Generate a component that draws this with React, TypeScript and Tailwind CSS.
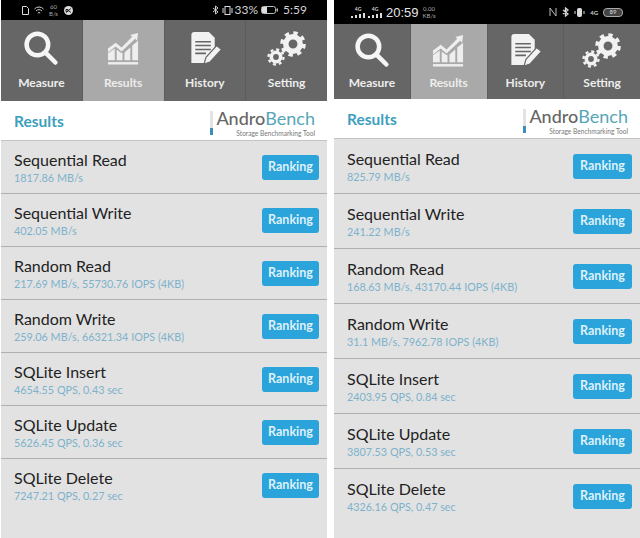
import React from "react";

const font = { fontFamily: 'Lato, "Noto Sans", sans-serif' };

type Row = { name: string; value: string };

const leftRows: Row[] = [
  { name: "Sequential Read", value: "1817.86 MB/s" },
  { name: "Sequential Write", value: "402.05 MB/s" },
  { name: "Random Read", value: "217.69 MB/s, 55730.76 IOPS (4KB)" },
  { name: "Random Write", value: "259.06 MB/s, 66321.34 IOPS (4KB)" },
  { name: "SQLite Insert", value: "4654.55 QPS, 0.43 sec" },
  { name: "SQLite Update", value: "5626.45 QPS, 0.36 sec" },
  { name: "SQLite Delete", value: "7247.21 QPS, 0.27 sec" },
];

const rightRows: Row[] = [
  { name: "Sequential Read", value: "825.79 MB/s" },
  { name: "Sequential Write", value: "241.22 MB/s" },
  { name: "Random Read", value: "168.63 MB/s, 43170.44 IOPS (4KB)" },
  { name: "Random Write", value: "31.1 MB/s, 7962.78 IOPS (4KB)" },
  { name: "SQLite Insert", value: "2403.95 QPS, 0.84 sec" },
  { name: "SQLite Update", value: "3807.53 QPS, 0.53 sec" },
  { name: "SQLite Delete", value: "4326.16 QPS, 0.47 sec" },
];

function SearchIcon() {
  return (
    <svg width="36" height="36" viewBox="0 0 40 40" fill="none" stroke="#f6f6f6">
      <circle cx="16" cy="15" r="12" strokeWidth="5" />
      <path d="M25 24l11 11" strokeWidth="5" strokeLinecap="round" />
    </svg>
  );
}

function ChartIcon() {
  return (
    <svg width="33" height="35" viewBox="0 0 34 36" fill="#eeeeee">
      <path d="M1 18l8-6 6 5 11-11-2-2 8-2-1 8-2-2-14 13-6-5-8 6z" />
      <path d="M1 23l7-5v12H1zM10 19l4 3 2 1v7h-6zM18 22l6-5v13h-6zM26 15l6-5v20h-6z" />
      <rect x="1" y="32" width="31" height="2.5" />
    </svg>
  );
}

function DocIcon() {
  return (
    <svg width="36" height="37" viewBox="0 0 36 38" fill="none">
      <path d="M7 2h15l6 6v14l-9 12H4V5a3 3 0 013-3z" fill="#f2f2f2" />
      <path d="M8 12h16M8 16h16M8 20h16M8 24h11" stroke="#666" strokeWidth="1.6" />
      <path d="M30 16l5 4-12 13-6 2 2-7z" fill="#f2f2f2" stroke="#666" strokeWidth="1.2" />
    </svg>
  );
}

function Gear({ x, y, r }: { x: number; y: number; r: number }) {
  const teeth = 2 * Math.PI * (r + 1);
  const dash = teeth / 8 / 2;
  return (
    <g fill="none" stroke="#f2f2f2">
      <circle cx={x} cy={y} r={r * 0.72} strokeWidth={r * 0.55} />
      <circle cx={x} cy={y} r={r + 1} strokeWidth={r * 0.36} strokeDasharray={`${dash} ${dash}`} />
    </g>
  );
}

function GearsIcon() {
  return (
    <svg width="40" height="36" viewBox="0 0 40 36">
      <Gear x={26} y={13} r={10} />
      <Gear x={9} y={26} r={6.5} />
    </svg>
  );
}

function Tab({
  label,
  active,
  icon,
  labelPad,
}: {
  label: string;
  active?: boolean;
  icon: React.ReactNode;
  labelPad: string;
}) {
  return (
    <div
      className={`flex-1 flex flex-col items-center justify-end border-r border-[#5c5c5c] last:border-r-0 ${labelPad} ${
        active ? "bg-[#a9a9a9]" : "bg-[#666666]"
      }`}
    >
      <div className="flex-1 flex items-center justify-center pt-1">{icon}</div>
      <span className="text-[12px] font-bold leading-[19px] text-[#ededed]">{label}</span>
    </div>
  );
}

function Logo() {
  return (
    <div className="flex items-start pt-[3px]">
      <div className="w-[3px] h-[24px] mt-[3px] bg-[#e3e3e3] flex flex-col justify-end mr-[3px]">
        <div className="h-[7px] bg-[#3c8ebd]" />
      </div>
      <div className="flex flex-col items-end">
        <span className="text-[18px] leading-[21px] text-[#666]">
          <span className="font-medium">Andro</span>
          <span className="text-[#56a6b8]">Bench</span>
        </span>
        <span className="text-[6.6px] leading-[8px] text-[#777]">Storage Benchmarking Tool</span>
      </div>
    </div>
  );
}

function ResultRow({ row, height, button }: { row: Row; height: string; button: string }) {
  return (
    <div className={`flex items-center justify-between pl-[13px] pr-2 border-b border-[#b0b0b0] last:border-transparent ${height}`}>
      <div className="flex flex-col">
        <span className="text-[16px] leading-[20px] text-[#222]">{row.name}</span>
        <span className="text-[10.8px] leading-[15px] text-[#7db2cc]">{row.value}</span>
      </div>
      <div className={`h-[25px] rounded-[3px] bg-[#2ba3db] flex items-center justify-center text-[12.5px] font-bold text-[#dff1fa] ${button}`}>
        Ranking
      </div>
    </div>
  );
}

function LeftStatus() {
  return (
    <div className="h-5 bg-black flex items-center justify-between pl-[21px] pr-5 text-[#d4d4d4]">
      <div className="flex items-center gap-[5px]">
        <svg width="7" height="9" viewBox="0 0 7 9" fill="none" stroke="#ddd">
          <path d="M.5.5h4l2 2v6h-6z" />
        </svg>
        <svg width="10" height="9" viewBox="0 0 10 9" fill="none" stroke="#ccc">
          <path d="M.5 3a6 6 0 019 0M2 5a4 4 0 016 0M3.8 7a2 2 0 012.4 0" />
        </svg>
        <span className="text-[6px] leading-[7px] text-center text-[#aaa]">
          60
          <br />
          B/s
        </span>
        <svg width="9" height="9" viewBox="0 0 9 9" className="ml-[1px]">
          <circle cx="4.5" cy="4.5" r="4.5" fill="#ddd" />
          <path d="M2 6.5l5-4M2 3.5h2v2H2zM5 5l2 1.5" stroke="#222" strokeWidth="1" fill="none" />
        </svg>
      </div>
      <div className="flex items-center gap-[2px] text-[12px]">
        <svg width="7" height="10" viewBox="0 0 7 10" fill="none" stroke="#ccc">
          <path d="M1 3l5 4-2.5 2V1L6 3 1 7" />
        </svg>
        <svg width="11" height="9" viewBox="0 0 11 9" fill="none" stroke="#ddd" className="ml-[1px]">
          <rect x="3" y=".5" width="5" height="8" />
          <path d="M1 2v5M10 2v5" />
        </svg>
        <span>33%</span>
        <svg width="18" height="8" viewBox="0 0 18 8" className="ml-[1px] mr-[2px]">
          <rect x=".5" y=".5" width="14" height="7" rx="2" fill="none" stroke="#bbb" />
          <rect x="1" y="1" width="5" height="6" fill="#ddd" />
          <rect x="15.5" y="2.5" width="1.5" height="3" fill="#bbb" />
        </svg>
        <span>5:59</span>
      </div>
    </div>
  );
}

function Signal() {
  return (
    <div className="flex flex-col items-center w-[14px]">
      <span className="text-[5px] leading-[7px] font-bold text-[#ccc]">4G</span>
      <svg width="14" height="5" viewBox="0 0 14 5" fill="#ddd">
        <rect x="0" y="3" width="2" height="2" />
        <rect x="4" y="2" width="2" height="3" />
        <rect x="8" y="1" width="2" height="4" />
        <rect x="12" y="0" width="2" height="5" />
      </svg>
    </div>
  );
}

function RightStatus() {
  return (
    <div className="h-[24px] bg-black flex items-center justify-between pl-[17px] pr-[17px] text-[#e4e4e4]">
      <div className="flex items-center gap-[3px]">
        <Signal />
        <Signal />
        <span className="text-[13px] leading-none ml-[1px]" style={{ fontFamily: '"Liberation Sans", sans-serif' }}>
          20:59
        </span>
        <span className="text-[6px] leading-[7px] text-center text-[#aaa] ml-[1px]">
          0.00
          <br />
          KB/s
        </span>
      </div>
      <div className="flex items-center gap-[5px]">
        <svg width="8" height="10" viewBox="0 0 8 10" fill="none" stroke="#bbb">
          <path d="M1 9V1l6 8V1" />
        </svg>
        <svg width="7" height="10" viewBox="0 0 7 10" fill="none" stroke="#ddd" strokeWidth="1.3">
          <path d="M1 3l5 4-2.5 2V1L6 3 1 7" />
        </svg>
        <svg width="11" height="9" viewBox="0 0 11 9" fill="none" stroke="#ddd">
          <rect x="3.5" y=".5" width="4" height="8" rx="1" fill="#ddd" />
          <path d="M1 3v3M10 3v3" />
        </svg>
        <span className="text-[6px] font-bold text-[#ccc]">4G</span>
        <div className="w-[20px] h-[9px] rounded-[4px] border border-[#aaa] bg-[#444] flex items-center justify-center text-[6px] leading-none text-[#ddd]">
          89
        </div>
      </div>
    </div>
  );
}

function Phone({
  rows,
  status,
  width,
  tabsH,
  labelPad,
  rowH,
  button,
}: {
  rows: Row[];
  status: React.ReactNode;
  width: string;
  tabsH: string;
  labelPad: string;
  rowH: string;
  button: string;
}) {
  return (
    <div className={`flex flex-col h-full ${width}`}>
      {status}
      <div className={`flex ${tabsH}`}>
        <Tab label="Measure" labelPad={labelPad} icon={<SearchIcon />} />
        <Tab label="Results" labelPad={labelPad} active icon={<ChartIcon />} />
        <Tab label="History" labelPad={labelPad} icon={<DocIcon />} />
        <Tab label="Setting" labelPad={labelPad} icon={<GearsIcon />} />
      </div>
      <div className="flex items-center justify-between bg-white pl-[13px] pr-3 border-b border-[#c4c4c4] h-[40px]">
        <span className="text-[15.5px] font-bold pt-[2px] text-[#3d9fc0]">Results</span>
        <Logo />
      </div>
      <div className="flex-1 bg-[#e2e2e2]">
        {rows.map((row) => (
          <ResultRow key={row.name} row={row} height={rowH} button={button} />
        ))}
      </div>
    </div>
  );
}

export default function App() {
  return (
    <div className="w-[640px] h-[538px] overflow-hidden bg-white flex pl-px gap-[7px]" style={font}>
      <Phone
        rows={leftRows}
        status={<LeftStatus />}
        width="w-[326px]"
        tabsH="h-[81px]"
        labelPad="pb-[9px]"
        rowH="h-[53px]"
        button="w-[57px]"
      />
      <Phone
        rows={rightRows}
        status={<RightStatus />}
        width="w-[306px]"
        tabsH="h-[75px]"
        labelPad="pb-[7px]"
        rowH="h-[55px]"
        button="w-[59px]"
      />
    </div>
  );
}
